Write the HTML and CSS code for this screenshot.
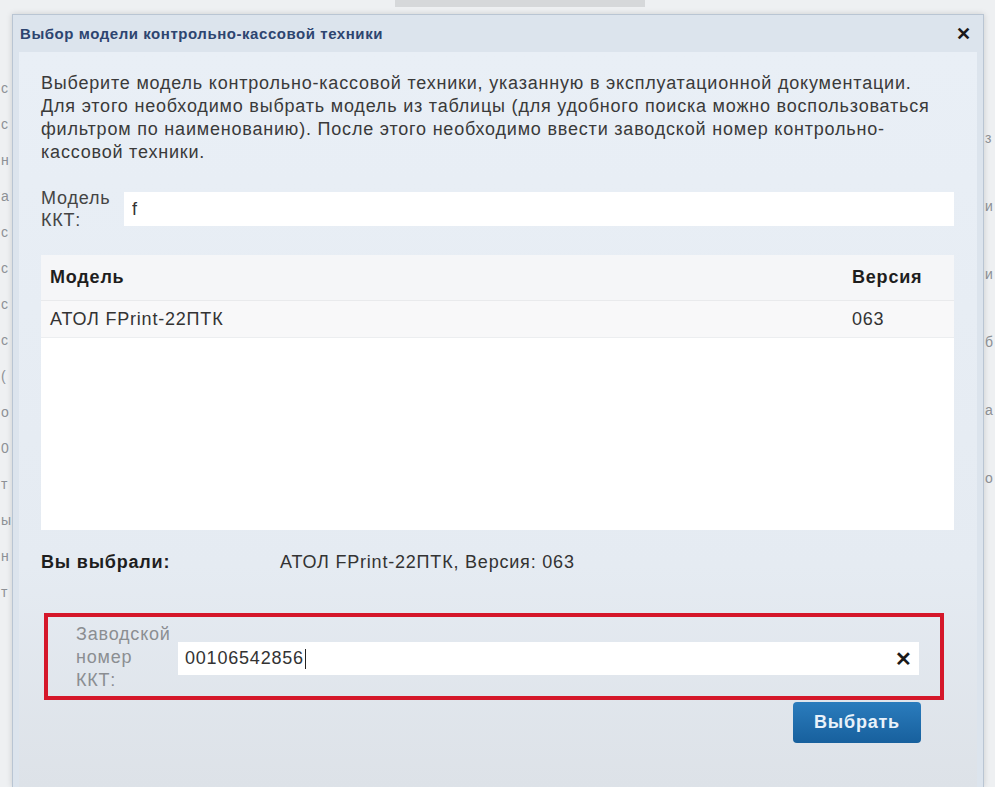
FILE: index.html
```html
<!DOCTYPE html>
<html lang="ru">
<head>
    <meta charset="UTF-8">
    <title>Выбор модели контрольно-кассовой техники</title>
    <link rel="stylesheet" href="styles.css">
</head>
<body>

    <!-- Страница под диалогом -->
    <div class="backdrop">
        <div class="top-bar"></div>
        <div class="side-text left">
            <span>с</span>
            <span>с</span>
            <span>н</span>
            <span>а</span>
            <span>с</span>
            <span>с</span>
            <span>с</span>
            <span>с</span>
            <span>(</span>
            <span>о</span>
            <span>0</span>
            <span>т</span>
            <span>ы</span>
            <span>н</span>
            <span>т</span>
        </div>
        <div class="side-text right">
            <span>з</span>
            <span>и</span>
            <span>и</span>
            <span>б</span>
            <span>а</span>
            <span>о</span>
        </div>
    </div>

    <div class="dialog">
        <div class="dlg-head">
            <span class="dlg-title">Выбор модели контрольно-кассовой техники</span>
            <span class="dlg-close">&#x2715;</span>
        </div>

        <div class="dlg-body">
            <p class="intro">
                Выберите модель контрольно-кассовой техники, указанную в эксплуатационной документации.<br>
                Для этого необходимо выбрать модель из таблицы (для удобного поиска можно воспользоваться<br>
                фильтром по наименованию). После этого необходимо ввести заводской номер контрольно-<br>
                кассовой техники.
            </p>

            <div class="field">
                <label class="field-label" for="model">Модель<br>ККТ:</label>
                <input class="field-input" id="model" type="text" value="f">
            </div>

            <div class="grid">
                <div class="grid-row grid-head">
                    <span class="col-name">Модель</span>
                    <span class="col-ver">Версия</span>
                </div>
                <div class="grid-row grid-item">
                    <span class="col-name">АТОЛ FPrint-22ПТК</span>
                    <span class="col-ver">063</span>
                </div>
            </div>

            <div class="chosen">
                <span class="chosen-label">Вы выбрали:</span>
                <span class="chosen-value">АТОЛ FPrint-22ПТК, Версия: 063</span>
            </div>

            <div class="highlight">
                <label class="serial-label" for="serial">Заводской<br>номер<br>ККТ:</label>
                <div class="serial-box">
                    <span class="serial-value">00106542856<span class="caret"></span></span>
                    <span class="serial-clear">&#x2715;</span>
                </div>
            </div>

            <div class="actions">
                <button class="btn-select">Выбрать</button>
            </div>
        </div>
    </div>

</body>
</html>
```

FILE: styles.css
```css
/* Общее */
body {
    margin: 0;
    height: 787px;
    overflow: hidden;
    position: relative;
    background: #eef0f2;
    font-family: "Liberation Sans", Arial, sans-serif;
    color: #333;
}

/* Фон страницы */
.backdrop {
    height: 100%;
    position: relative;
}

.top-bar {
    margin-left: 395px;
    width: 250px;
    height: 7px;
    background: #d6d8da;
}

.side-text {
    position: absolute;
    top: 80px;
    display: flex;
    flex-direction: column;
    gap: 20px;
    font-size: 14px;
    color: #8d9196;
}

.side-text.left {
    left: 1px;
}

.side-text.right {
    right: 2px;
    top: 130px;
    gap: 52px;
}

/* Диалог */
.dialog {
    position: absolute;
    left: 12px;
    top: 14px;
    width: 970px;
    height: 772px;
    background: #dce4ed;
    border: 1px solid #b9c5d3;
    border-bottom: none;
    box-shadow: 0 0 6px rgba(0, 0, 0, 0.15);
    font-size: 18px;
    letter-spacing: 0.8px;
}

.dlg-head {
    height: 37px;
    display: flex;
    align-items: center;
    justify-content: space-between;
    padding: 0 11px 0 7px;
}

.dlg-title {
    font-size: 15px;
    font-weight: bold;
    letter-spacing: 0.55px;
    color: #2d4570;
}

.dlg-close {
    font-size: 18px;
    font-weight: bold;
    color: #1a1a1a;
}

.dlg-body {
    margin: 0 6px;
    height: 715px;
    background: linear-gradient(#e9eff6, #e5ebf2 70%, #dde2e8);
    padding: 20px 23px 0 22px;
}

/* Описание */
.intro {
    margin: 0;
    line-height: 23px;
    color: #3a3a3a;
}

/* Поле модели */
.field {
    display: flex;
    align-items: flex-start;
    margin-top: 23px;
}

.field-label {
    width: 83px;
    line-height: 22px;
    color: #444;
}

.field-input {
    flex: 1;
    height: 34px;
    margin-top: 5px;
    box-sizing: border-box;
    border: none;
    background: #fff;
    padding: 0 8px;
    font-family: inherit;
    font-size: 18px;
    letter-spacing: 0.8px;
    color: #333;
}

/* Таблица */
.grid {
    margin-top: 24px;
    height: 275px;
    background: #fff;
}

.grid-row {
    display: flex;
    align-items: center;
    padding: 0 32px 0 9px;
}

.grid-head {
    height: 45px;
    background: #f5f6f8;
    font-weight: bold;
    color: #1e1e1e;
}

.grid-item {
    height: 36px;
    background: #f8f8f9;
    border-top: 1px solid #e9eaec;
    border-bottom: 1px solid #eceef0;
    color: #333;
}

.col-name {
    flex: 1;
}

.col-ver {
    width: 70px;
}

/* Выбранная модель */
.chosen {
    display: flex;
    align-items: center;
    height: 64px;
}

.chosen-label {
    width: 239px;
    font-weight: bold;
    color: #1e1e1e;
}

.chosen-value {
    color: #333;
}

/* Красная рамка */
.highlight {
    margin: 19px 10px 0 3px;
    height: 79px;
    border: 4px solid #d5172a;
    display: flex;
    align-items: center;
    padding: 0 21px 0 28px;
}

.serial-label {
    width: 102px;
    line-height: 23px;
    color: #8b8e92;
    margin-top: 2px;
}

.serial-box {
    flex: 1;
    height: 33px;
    background: #fff;
    display: flex;
    align-items: center;
    justify-content: space-between;
    padding: 0 6px 0 7px;
    margin-top: 4px;
}

.serial-value {
    color: #333;
    display: flex;
    align-items: center;
}

.caret {
    width: 1px;
    height: 20px;
    background: #222;
    margin-left: 1px;
}

.serial-clear {
    font-size: 20px;
    font-weight: bold;
    color: #1a1a1a;
}

/* Кнопка */
.actions {
    display: flex;
    justify-content: flex-end;
    padding-right: 33px;
}

.btn-select {
    width: 128px;
    height: 41px;
    margin-top: 2px;
    border: none;
    border-radius: 4px;
    background: linear-gradient(#2b7cbd, #17609d);
    color: #e9f2fa;
    font-family: inherit;
    font-size: 18px;
    letter-spacing: 0.8px;
    font-weight: bold;
    cursor: pointer;
}
```
